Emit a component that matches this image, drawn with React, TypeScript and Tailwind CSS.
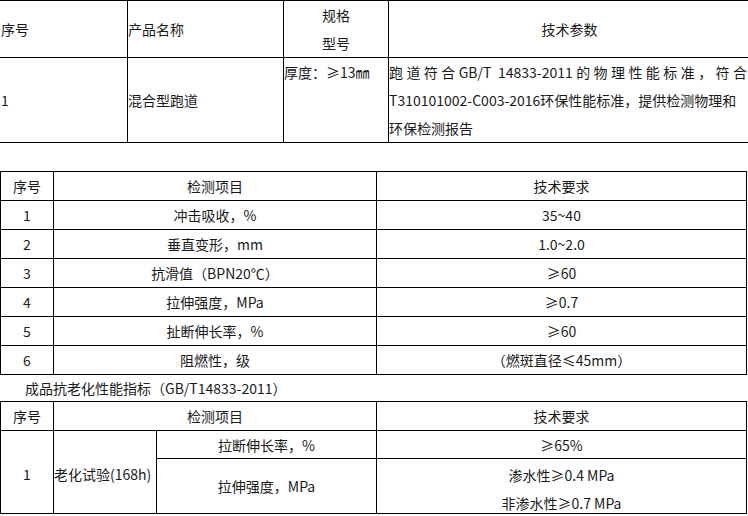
const specRows = [
  ['1', '冲击吸收，%', '35~40'],
  ['2', '垂直变形，mm', '1.0~2.0'],
  ['3', '抗滑值（BPN20℃）', '≥60'],
  ['4', '拉伸强度，MPa', '≥0.7'],
  ['5', '扯断伸长率，%', '≥60'],
  ['6', '阻燃性，级', '（燃斑直径≤45mm）'],
]

// grid lines come from the black background showing through 1px gaps
const box = 'bg-white flex items-center'
const mid = 'bg-white flex items-center justify-center'

export default function App() {
  return (
    <div className="w-[748px] h-[516px] overflow-hidden bg-white text-[14px] leading-[28px] text-[#1a1a1a] font-['Noto_Sans_CJK_SC','Noto_Sans',sans-serif]">
      {/* product table */}
      <div className="grid grid-cols-[127px_155px_104px_361px] grid-rows-[56px_84px] gap-px bg-black border border-black w-[750px] -ml-px">
        <div className={`${box} pl-[1px]`}>序号</div>
        <div className={box}>产品名称</div>
        <div className="bg-white flex flex-col items-center justify-center">
          <div>规格</div>
          <div>型号</div>
        </div>
        <div className={mid}>技术参数</div>

        <div className={`${box} pl-[1px]`}>1</div>
        <div className={box}>混合型跑道</div>
        <div className="bg-white">厚度：≥13㎜</div>
        <div className="bg-white flex flex-col justify-center pr-[3px]">
          <div className="text-justify [text-align-last:justify]">跑道符合GB/T 14833-2011的物理性能标准，符合</div>
          <div className="whitespace-nowrap">T310101002-C003-2016环保性能标准，提供检测物理和</div>
          <div>环保检测报告</div>
        </div>
      </div>

      {/* performance table */}
      <div className="mt-[28px] grid grid-cols-[52px_322px_369px] auto-rows-[28px] gap-px bg-black border border-black w-[747px]">
        <div className={mid}>序号</div>
        <div className={mid}>检测项目</div>
        <div className={mid}>技术要求</div>
        {specRows.map(([n, item, req]) => (
          <div key={n} className="contents">
            <div className={mid}>{n}</div>
            <div className={mid}>{item}</div>
            <div className={mid}>{req}</div>
          </div>
        ))}
      </div>

      <div className="h-[26px] leading-[26px] pl-[25px]">成品抗老化性能指标（GB/T14833-2011）</div>

      {/* aging table */}
      <div className="grid grid-cols-[52px_102px_219px_369px] grid-rows-[28px_27px_54px] gap-px bg-black border border-black w-[747px]">
        <div className={mid}>序号</div>
        <div className={`${mid} col-span-2`}>检测项目</div>
        <div className={mid}>技术要求</div>

        <div className={`${mid} row-span-2 pt-[3px]`}>1</div>
        <div className={`${box} row-span-2 pt-[3px] whitespace-nowrap`}>老化试验(168h)</div>
        <div className={mid}>拉断伸长率，%</div>
        <div className={mid}>≥65%</div>

        <div className={mid}>拉伸强度，MPa</div>
        <div className="bg-white text-center pt-[7px] leading-[18px]">
          <div>渗水性≥0.4 MPa</div>
          <div className="mt-[10px]">非渗水性≥0.7 MPa</div>
        </div>
      </div>
    </div>
  )
}
